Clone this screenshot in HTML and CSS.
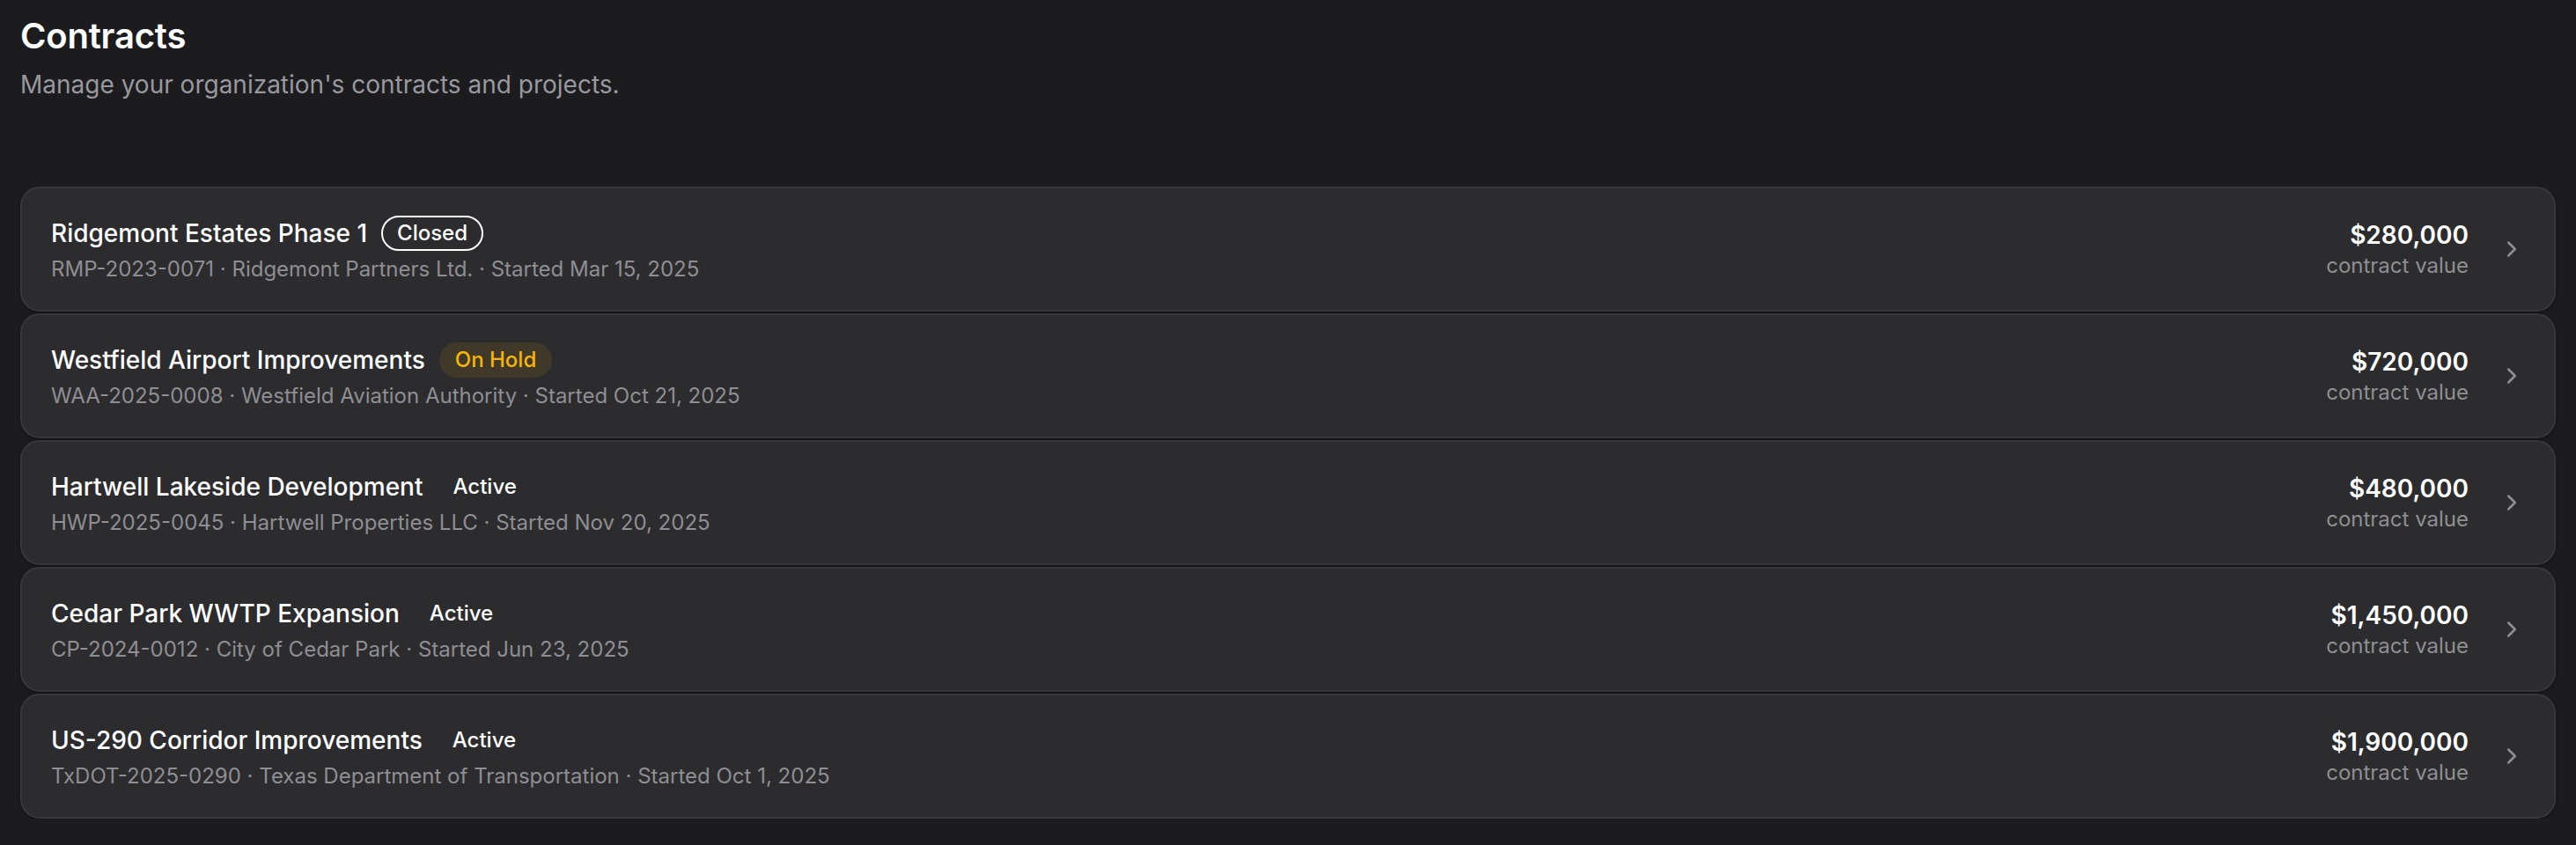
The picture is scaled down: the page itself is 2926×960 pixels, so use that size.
FILE: index.html
```html
<!DOCTYPE html>
<html lang="en">
<head>
<meta charset="utf-8">
<title>Contracts</title>
<link rel="stylesheet" href="styles.css">
</head>
<body>
<main class="page">
  <header class="header">
    <h1 class="title">Contracts</h1>
    <p class="subtitle">Manage your organization's contracts and projects.</p>
  </header>
  <ul class="list">
    <li class="card">
      <div class="info">
        <div class="name-row">
          <span class="name">Ridgemont Estates Phase 1</span>
          <span class="badge badge-closed">Closed</span>
        </div>
        <div class="meta">RMP-2023-0071 · Ridgemont Partners Ltd. · Started Mar 15, 2025</div>
      </div>
      <div class="value">
        <div class="amount">$280,000</div>
        <div class="value-label">contract value</div>
      </div>
      <svg class="chevron" viewBox="0 0 24 24" fill="none" stroke="currentColor" stroke-width="2" stroke-linecap="round" stroke-linejoin="round"><path d="m9 18 6-6-6-6"/></svg>
    </li>
    <li class="card">
      <div class="info">
        <div class="name-row">
          <span class="name">Westfield Airport Improvements</span>
          <span class="badge badge-hold">On Hold</span>
        </div>
        <div class="meta">WAA-2025-0008 · Westfield Aviation Authority · Started Oct 21, 2025</div>
      </div>
      <div class="value">
        <div class="amount">$720,000</div>
        <div class="value-label">contract value</div>
      </div>
      <svg class="chevron" viewBox="0 0 24 24" fill="none" stroke="currentColor" stroke-width="2" stroke-linecap="round" stroke-linejoin="round"><path d="m9 18 6-6-6-6"/></svg>
    </li>
    <li class="card">
      <div class="info">
        <div class="name-row">
          <span class="name">Hartwell Lakeside Development</span>
          <span class="badge badge-active">Active</span>
        </div>
        <div class="meta">HWP-2025-0045 · Hartwell Properties LLC · Started Nov 20, 2025</div>
      </div>
      <div class="value">
        <div class="amount">$480,000</div>
        <div class="value-label">contract value</div>
      </div>
      <svg class="chevron" viewBox="0 0 24 24" fill="none" stroke="currentColor" stroke-width="2" stroke-linecap="round" stroke-linejoin="round"><path d="m9 18 6-6-6-6"/></svg>
    </li>
    <li class="card">
      <div class="info">
        <div class="name-row">
          <span class="name">Cedar Park WWTP Expansion</span>
          <span class="badge badge-active">Active</span>
        </div>
        <div class="meta">CP-2024-0012 · City of Cedar Park · Started Jun 23, 2025</div>
      </div>
      <div class="value">
        <div class="amount">$1,450,000</div>
        <div class="value-label">contract value</div>
      </div>
      <svg class="chevron" viewBox="0 0 24 24" fill="none" stroke="currentColor" stroke-width="2" stroke-linecap="round" stroke-linejoin="round"><path d="m9 18 6-6-6-6"/></svg>
    </li>
    <li class="card">
      <div class="info">
        <div class="name-row">
          <span class="name">US-290 Corridor Improvements</span>
          <span class="badge badge-active">Active</span>
        </div>
        <div class="meta">TxDOT-2025-0290 · Texas Department of Transportation · Started Oct 1, 2025</div>
      </div>
      <div class="value">
        <div class="amount">$1,900,000</div>
        <div class="value-label">contract value</div>
      </div>
      <svg class="chevron" viewBox="0 0 24 24" fill="none" stroke="currentColor" stroke-width="2" stroke-linecap="round" stroke-linejoin="round"><path d="m9 18 6-6-6-6"/></svg>
    </li>
  </ul>
</main>
</body>
</html>
```

FILE: styles.css
```css
* {
  box-sizing: border-box;
}

html, body {
  margin: 0;
  padding: 0;
  background: #1c1c1e;
}

body {
  font-family: Inter, "Noto Sans", "Liberation Sans", sans-serif;
  color: #ffffff;
  -webkit-font-smoothing: antialiased;
}

.page {
  padding: 17px 23px 0;
}

.header {
  display: flex;
  flex-direction: column;
  gap: 14px;
}

.title {
  margin: 0;
  font-size: 40px;
  line-height: 48px;
  font-weight: 600;
  color: #ffffff;
  letter-spacing: -0.2px;
}

.subtitle {
  margin: 0;
  font-size: 28px;
  line-height: 34px;
  font-weight: 400;
  color: #98989f;
}

.list {
  list-style: none;
  margin: 99px 0 0;
  padding: 0;
  display: flex;
  flex-direction: column;
  gap: 2px;
}

.card {
  display: flex;
  align-items: center;
  gap: 34px;
  padding: 31px 33px;
  background: #2c2c2e;
  border: 2px solid #38383b;
  border-radius: 22px;
  box-shadow: 0 2px 4px rgba(0, 0, 0, 0.35);
}

.info {
  flex: 1;
  display: flex;
  flex-direction: column;
  gap: 6px;
  min-width: 0;
}

.name-row {
  display: flex;
  align-items: center;
  gap: 16px;
}

.name {
  font-size: 28px;
  line-height: 34px;
  font-weight: 500;
  color: #ffffff;
}

.badge {
  display: inline-flex;
  align-items: center;
  height: 40px;
  padding: 0 16px;
  border-radius: 999px;
  border: 2px solid transparent;
  font-size: 24px;
  font-weight: 500;
  line-height: 1;
}

.badge-closed {
  border-color: #ffffff;
  color: #ffffff;
}

.badge-hold {
  background: rgba(245, 180, 10, 0.1);
  color: #f5b50a;
}

.badge-active {
  color: #ffffff;
}

.meta {
  font-size: 24px;
  line-height: 30px;
  color: #8e8e93;
}

.value {
  display: flex;
  flex-direction: column;
  align-items: flex-end;
  gap: 4px;
}

.amount {
  font-size: 28px;
  line-height: 34px;
  font-weight: 600;
  color: #ffffff;
}

.value-label {
  font-size: 24px;
  line-height: 28px;
  color: #8e8e93;
}

.chevron {
  width: 30px;
  height: 30px;
  flex: none;
  color: #8e8e93;
}
```
